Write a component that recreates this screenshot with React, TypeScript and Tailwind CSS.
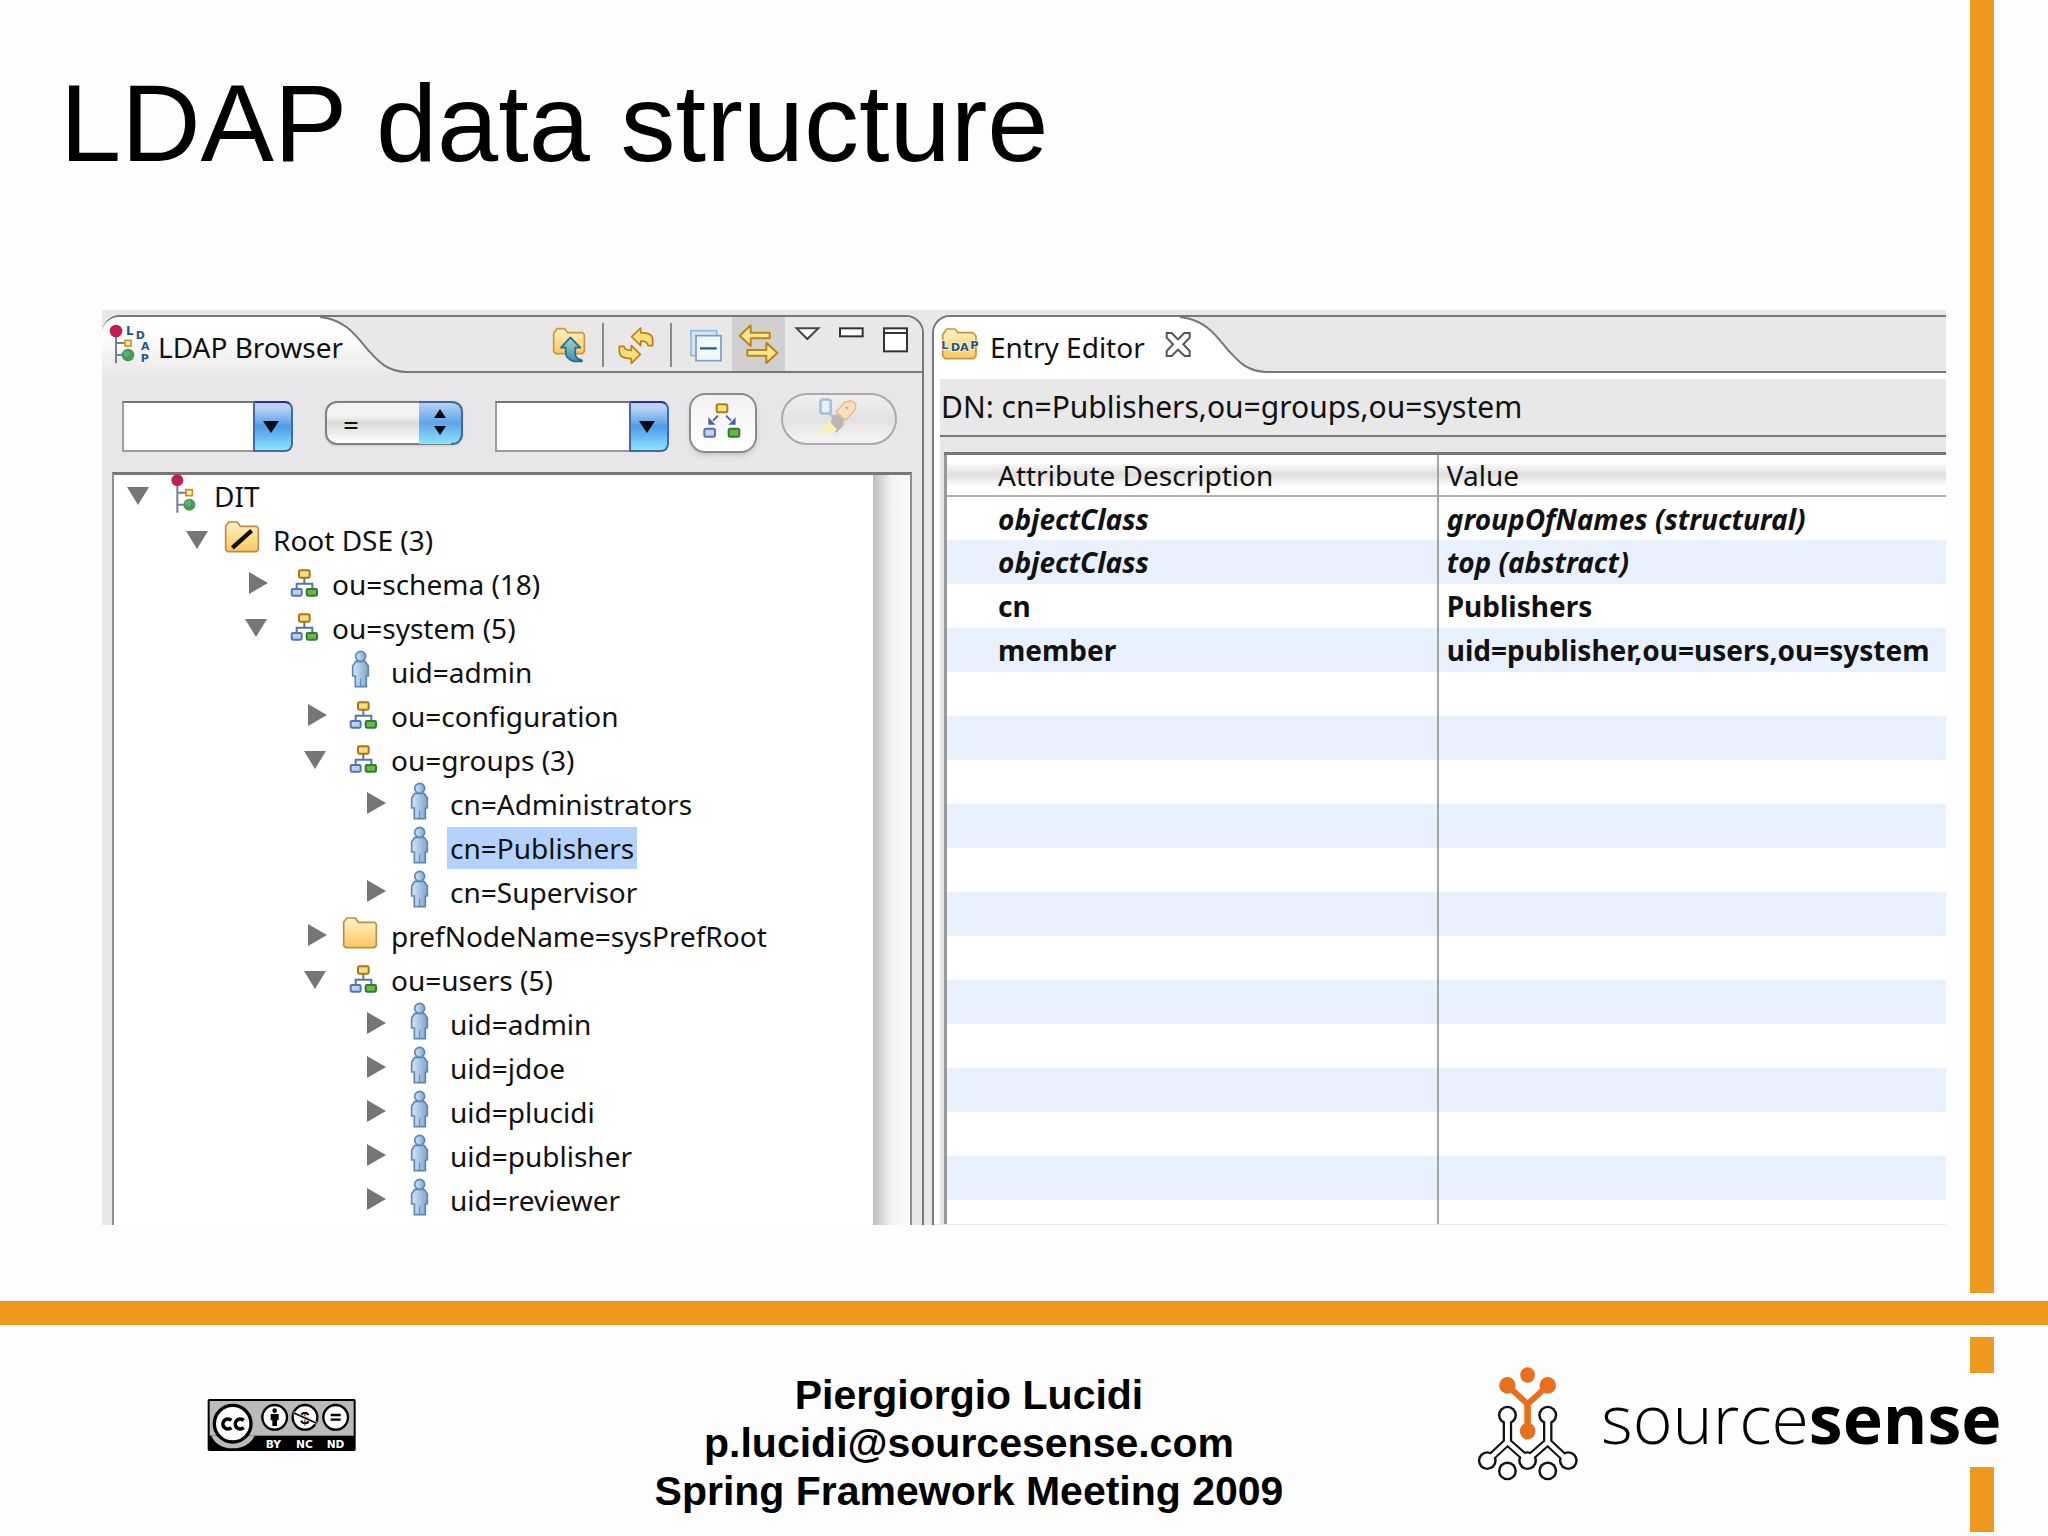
import { useState } from 'react';
import type { ReactNode } from 'react';
import clsx from 'clsx';

type IconKind = 'dit' | 'root' | 'org' | 'person' | 'folder';

interface TreeItem {
  id: string;
  label: string;
  depth: number;
  icon: IconKind;
  state: 'open' | 'closed' | 'leaf';
}

const treeItems: TreeItem[] = [
  { id: 'dit', label: 'DIT', depth: 0, icon: 'dit', state: 'open' },
  { id: 'root', label: 'Root DSE (3)', depth: 1, icon: 'root', state: 'open' },
  { id: 'schema', label: 'ou=schema (18)', depth: 2, icon: 'org', state: 'closed' },
  { id: 'system', label: 'ou=system (5)', depth: 2, icon: 'org', state: 'open' },
  { id: 'system-admin', label: 'uid=admin', depth: 3, icon: 'person', state: 'leaf' },
  { id: 'configuration', label: 'ou=configuration', depth: 3, icon: 'org', state: 'closed' },
  { id: 'groups', label: 'ou=groups (3)', depth: 3, icon: 'org', state: 'open' },
  { id: 'administrators', label: 'cn=Administrators', depth: 4, icon: 'person', state: 'closed' },
  { id: 'publishers', label: 'cn=Publishers', depth: 4, icon: 'person', state: 'leaf' },
  { id: 'supervisor', label: 'cn=Supervisor', depth: 4, icon: 'person', state: 'closed' },
  { id: 'prefs', label: 'prefNodeName=sysPrefRoot', depth: 3, icon: 'folder', state: 'closed' },
  { id: 'users', label: 'ou=users (5)', depth: 3, icon: 'org', state: 'open' },
  { id: 'users-admin', label: 'uid=admin', depth: 4, icon: 'person', state: 'closed' },
  { id: 'jdoe', label: 'uid=jdoe', depth: 4, icon: 'person', state: 'closed' },
  { id: 'plucidi', label: 'uid=plucidi', depth: 4, icon: 'person', state: 'closed' },
  { id: 'publisher', label: 'uid=publisher', depth: 4, icon: 'person', state: 'closed' },
  { id: 'reviewer', label: 'uid=reviewer', depth: 4, icon: 'person', state: 'closed' },
];

const indent = ['pl-[12px]', 'pl-[71px]', 'pl-[130px]', 'pl-[189px]', 'pl-[248px]'];

const attributes = [
  { name: 'objectClass', value: 'groupOfNames (structural)', italic: true },
  { name: 'objectClass', value: 'top (abstract)', italic: true },
  { name: 'cn', value: 'Publishers', italic: false },
  { name: 'member', value: 'uid=publisher,ou=users,ou=system', italic: false },
];

const emptyRows = Array.from({ length: 12 }, (_, i) => i);

function Gradients() {
  return (
    <svg className="absolute h-0 w-0" aria-hidden="true">
      <defs>
        <linearGradient id="gold" x1="0" y1="0" x2="0" y2="1">
          <stop offset="0" stopColor="#fff3c4" />
          <stop offset="1" stopColor="#fbc85f" />
        </linearGradient>
        <linearGradient id="person" x1="0" y1="0" x2="1" y2="0">
          <stop offset="0" stopColor="#d5e6f6" />
          <stop offset="1" stopColor="#7fa5cf" />
        </linearGradient>
        <linearGradient id="arrowUp" x1="0" y1="0" x2="0" y2="1">
          <stop offset="0" stopColor="#a5d6bd" />
          <stop offset="1" stopColor="#3f8fb5" />
        </linearGradient>
      </defs>
    </svg>
  );
}

function TreeIcon({ kind }: { kind: IconKind }) {
  const base = 'h-[42px] w-[38px] shrink-0 overflow-visible';

  if (kind === 'dit') {
    return (
      <svg className={base} viewBox="195 45 114 126" aria-hidden="true">
        <path d="M232 70V158M232 98H258M232 134H256" stroke="#77808f" strokeWidth="6" fill="none" />
        <circle cx="232" cy="61" r="18" fill="#c01f50" />
        <rect x="258" y="89" width="19" height="18" fill="#fff0b0" stroke="#c4901f" strokeWidth="5" />
        <circle cx="268" cy="134" r="18" fill="#489a5c" />
        <circle cx="264" cy="130" r="9" fill="#62b173" />
      </svg>
    );
  }
  if (kind === 'org') {
    return (
      <svg className={base} viewBox="549 309 114 126" aria-hidden="true">
        <path d="M613 354V370M590 390V371H637V390" stroke="#5673ae" strokeWidth="6" fill="none" />
        <rect x="597" y="331" width="32" height="22" rx="4" fill="#fddc80" stroke="#a87514" strokeWidth="6" />
        <rect x="575" y="387" width="30" height="20" rx="4" fill="#b7d3f0" stroke="#5673ae" strokeWidth="6" />
        <rect x="620" y="387" width="31" height="20" rx="4" fill="#6cb93f" stroke="#2f7a36" strokeWidth="6" />
      </svg>
    );
  }
  if (kind === 'person') {
    return (
      <svg className={base} viewBox="726 573 114 126" aria-hidden="true">
        <path
          d="M768 604H795L805 618V648H799V680H766V648H758V618Z"
          fill="url(#person)"
          stroke="#5b86b4"
          strokeWidth="5"
          strokeLinejoin="round"
        />
        <circle cx="782" cy="589" r="15" fill="url(#person)" stroke="#5b86b4" strokeWidth="5" />
        <path d="M782 655V680" stroke="#5b86b4" strokeWidth="3" />
      </svg>
    );
  }
  return (
    <svg className={base} viewBox="372 177 114 126" aria-hidden="true">
      <path
        d="M377 198L387 186H412L421 199H470L475 205V269L469 275H383L377 269Z"
        fill="url(#gold)"
        stroke="#c08a42"
        strokeWidth="5"
        strokeLinejoin="round"
      />
      {kind === 'root' && <path d="M402 259L450 216" stroke="#111" strokeWidth="13" strokeLinecap="square" />}
    </svg>
  );
}

function Arrow({ state }: { state: TreeItem['state'] }) {
  return (
    <svg className="mr-[14px] h-[42px] w-6 shrink-0" viewBox="0 0 24 42" aria-hidden="true">
      {state === 'open' && <path d="M0 12H22L11 30Z" fill="#767676" />}
      {state === 'closed' && <path d="M4 9L23 20L4 31Z" fill="#767676" />}
    </svg>
  );
}

function ToolButton({ label, className, viewBox, children }: { label: string; className: string; viewBox: string; children: ReactNode }) {
  return (
    <button type="button" aria-label={label} className={clsx('h-[54px] shrink-0', className)}>
      <svg className="h-full w-full" viewBox={viewBox} fill="none">
        {children}
      </svg>
    </button>
  );
}

function TabCurve({ fill }: { fill: string }) {
  return (
    <svg className="h-14 w-[86px] shrink-0" viewBox="0 0 86 56" aria-hidden="true">
      <defs>
        <linearGradient id="tabFade" x1="0" y1="0" x2="0" y2="1">
          <stop offset="0.3" stopColor="#ffffff" />
          <stop offset="1" stopColor="#ebe9ea" />
        </linearGradient>
      </defs>
      <path d="M0 0H86V56H0Z" fill="#e8e8e8" />
      <path d="M0 0C28 3 38 22 48 33S66 54 86 55V56H0Z" fill={fill} />
      <path d="M0 0C28 3 38 22 48 33S66 54 86 55" fill="none" stroke="#777" strokeWidth="2" />
    </svg>
  );
}

function Combo({ label, className }: { label: string; className: string }) {
  return (
    <div className={clsx('flex h-[51px]', className)}>
      <input
        type="text"
        aria-label={label}
        className="w-0 flex-1 border-2 border-r-0 border-[#9c9c9c] border-t-[#747474] bg-white px-2 text-[28px] outline-none"
      />
      <button
        type="button"
        aria-label={`${label} history`}
        className="flex w-10 items-center justify-center rounded-r-lg border-2 border-[#4468a0] border-t-[#2b2f9b] bg-linear-to-b from-[#b9d4f6] from-10% via-[#4f9be8] via-50% to-[#8be4fd] pr-1"
      >
        <svg className="h-3 w-4" viewBox="0 0 16 12" aria-hidden="true">
          <path d="M0 0H16L8 12Z" fill="#0b0b18" />
        </svg>
      </button>
    </div>
  );
}

function BrowserToolbar() {
  return (
    <div className="flex flex-1 items-start justify-end border-b-2 border-[#777] bg-[#e8e8e8]">
      <ToolButton label="Up" className="w-[55px]" viewBox="141 51 165 162">
        <path d="M161 100L171 86H194L203 98H248L253 104V155L247 161H167L161 155Z" fill="url(#gold)" stroke="#d09438" strokeWidth="5" strokeLinejoin="round" />
        <path d="M211 112L241 143H226V165Q230 178 246 181V184H222Q197 176 197 158V143H183Z" fill="url(#arrowUp)" stroke="#276a99" strokeWidth="5" strokeLinejoin="round" />
      </ToolButton>
      <div className="mt-[6px] h-11 w-[2px] bg-[#8a8a8a]" />
      <ToolButton label="Refresh" className="w-[66px]" viewBox="312 51 198 162">
        <path d="M395 110L422 84V98Q458 98 458 119V137H444Q443 123 422 123V137Z" fill="#fddf7d" stroke="#bf8015" strokeWidth="5" strokeLinejoin="round" />
        <path d="M421 163L394 190V176Q358 176 358 154V139H372Q373 151 394 151V137Z" fill="#fddf7d" stroke="#bf8015" strokeWidth="5" strokeLinejoin="round" />
      </ToolButton>
      <div className="mt-[6px] h-11 w-[2px] bg-[#8a8a8a]" />
      <ToolButton label="Collapse all" className="w-[60px]" viewBox="516 51 180 162">
        <rect x="573" y="92" width="77" height="75" fill="#cfe6f3" stroke="#93b9d8" strokeWidth="5" />
        <rect x="588" y="107" width="75" height="75" fill="#f0f8fd" stroke="#8199c6" strokeWidth="5" />
        <path d="M600 145H650" stroke="#1f5f96" strokeWidth="7" />
      </ToolButton>
      <ToolButton label="Link with editor" className="w-[53px] bg-[#d0d0d0]" viewBox="696 51 159 162">
        <path d="M719 107L752 76V98H809V115H752V138Z" fill="#ffe894" stroke="#bf8015" strokeWidth="6" strokeLinejoin="round" />
        <path d="M832 159L799 189V167H742V150H799V128Z" fill="#ffe894" stroke="#bf8015" strokeWidth="6" strokeLinejoin="round" />
      </ToolButton>
      <ToolButton label="View menu" className="w-[45px]" viewBox="855 51 135 162">
        <path d="M890 85H955L922 117Z" fill="#fff" stroke="#444" strokeWidth="6" />
      </ToolButton>
      <ToolButton label="Minimize" className="w-11" viewBox="990 51 132 162">
        <rect x="1020" y="85" width="68" height="24" fill="#fff" stroke="#333" strokeWidth="6" />
      </ToolButton>
      <ToolButton label="Maximize" className="w-12" viewBox="1122 51 144 162">
        <rect x="1152" y="85" width="69" height="69" fill="#fff" stroke="#333" strokeWidth="6" />
        <path d="M1152 99H1221" stroke="#333" strokeWidth="6" />
      </ToolButton>
    </div>
  );
}

function LdapBrowser() {
  const [selected, setSelected] = useState('publishers');

  return (
    <section className="mt-[5px] flex min-w-0 flex-col overflow-hidden rounded-t-[18px] border-t-2 border-r-2 border-[#777] bg-[#e8e6e8]">
      <div className="flex h-14 items-stretch">
        <div className="flex w-[218px] shrink-0 items-center bg-linear-to-b from-white from-30% to-[#ebe9ea]">
          <svg className="h-14 w-[56px] shrink-0" viewBox="36 51 168 168" aria-hidden="true">
            <path d="M78 95V190M78 129H104M78 165H98" stroke="#77808f" strokeWidth="6" fill="none" />
            <circle cx="78" cy="93" r="19" fill="#c01f50" />
            <rect x="105" y="121" width="18" height="17" fill="#fff0b0" stroke="#d0902a" strokeWidth="5" />
            <circle cx="114" cy="165" r="19" fill="#489a5c" />
            <circle cx="110" cy="161" r="9" fill="#62b173" />
            <g fill="#1e5590" fontFamily="DejaVu Sans, sans-serif" fontWeight="700" fontSize="36">
              <text x="108" y="105">L</text>
              <text x="137" y="117" fontSize="33">D</text>
              <text x="153" y="150" fontSize="33">A</text>
              <text x="152" y="186" fontSize="33">P</text>
            </g>
          </svg>
          <h2 className="relative z-10 pt-1 text-[28px] whitespace-nowrap">LDAP Browser</h2>
        </div>
        <TabCurve fill="url(#tabFade)" />
        <BrowserToolbar />
      </div>

      <div className="flex h-[99px] items-start pt-7 pr-6 pl-5">
        <Combo label="Attribute" className="mr-8 w-[171px]" />
        <div className="relative mr-8 h-11 w-[138px]">
          <select
            aria-label="Operator"
            className="h-full w-full appearance-none rounded-xl border-2 border-[#808080] bg-linear-to-b from-[#f4f4f4] from-30% via-[#dadada] via-50% to-white pl-4 text-[28px] shadow-sm"
          >
            <option>=</option>
          </select>
          <svg className="pointer-events-none absolute top-0 right-0 h-11 w-[44px]" viewBox="0 0 44 44" aria-hidden="true">
            <defs>
              <linearGradient id="stepper" x1="0" y1="0" x2="0" y2="1">
                <stop offset="0" stopColor="#b9d4f6" />
                <stop offset="0.5" stopColor="#5fa4e8" />
                <stop offset="1" stopColor="#8be4fd" />
              </linearGradient>
            </defs>
            <path d="M0 1H32Q43 1 43 12V32Q43 43 32 43H0Z" fill="url(#stepper)" />
            <path d="M0 1H32Q43 1 43 12V32Q43 43 32 43" fill="none" stroke="#4468a0" strokeWidth="2" />
            <path d="M15 17H27L21 8ZM15 25H27L21 34Z" fill="#0b0b18" />
          </svg>
        </div>
        <Combo label="Value" className="mr-5 w-[174px]" />
        <button
          type="button"
          aria-label="Search subtree"
          className="-mt-2 mr-6 h-[60px] w-[68px] rounded-2xl border-2 border-[#8b8b8b] bg-linear-to-b from-[#f2f2f2] to-white shadow-md"
        >
          <svg className="h-full w-full" viewBox="576 285 192 168" fill="none" aria-hidden="true">
            <rect x="653" y="313" width="32" height="24" rx="5" fill="#fddc80" stroke="#b37d17" strokeWidth="6" />
            <rect x="616" y="386" width="32" height="24" rx="5" fill="#b7d3f0" stroke="#5673ae" strokeWidth="6" />
            <rect x="689" y="386" width="32" height="24" rx="5" fill="#6cb93f" stroke="#2f7a36" strokeWidth="6" />
            <path d="M657 347L642 362M681 347L696 362" stroke="#4c62a8" strokeWidth="6" />
            <path d="M628 374V352L650 374ZM710 374V352L688 374Z" fill="#4c62a8" />
          </svg>
        </button>
        <button
          type="button"
          aria-label="Search"
          className="-mt-2 h-[52px] w-[116px] rounded-full border-2 border-[#aaa] bg-linear-to-b from-[#f0f0f0] via-[#e2e2e2] via-50% to-[#f4f4f4]"
        >
          <svg className="h-full w-full" viewBox="852 285 342 150" fill="none" aria-hidden="true">
            <path d="M1040 308L1060 303L1076 312L1074 330L1044 364L1014 338Z" fill="#f8dfb8" stroke="#e5b98a" strokeWidth="4" />
            <path d="M1044 322L1050 328" stroke="#9aa9b4" strokeWidth="5" />
            <path d="M1003 350L1018 345L1040 364L1036 382L1014 403L992 388Z" fill="#bcb6b6" />
            <path d="M992 366L960 403H1008L1016 392Z" fill="#fbf1b4" />
            <rect x="965" y="299" width="32" height="44" rx="8" fill="#e8eef6" stroke="#a8bcd8" strokeWidth="8" />
            <path d="M993 342L1006 356" stroke="#a8bcd8" strokeWidth="7" />
          </svg>
        </button>
      </div>

      <div className="mr-[10px] ml-[10px] flex flex-1 border-x-2 border-t-[3px] border-[#909090] border-t-[#777] bg-white">
        <ul className="flex-1 pb-[2px] pl-px">
          {treeItems.map(item => (
            <li key={item.id}>
              <button
                type="button"
                aria-expanded={item.state === 'leaf' ? undefined : item.state === 'open'}
                onClick={() => setSelected(item.id)}
                className={clsx('flex h-11 w-full items-start text-left', indent[item.depth])}
              >
                <Arrow state={item.state} />
                <TreeIcon kind={item.icon} />
                <span
                  className={clsx('ml-2 h-[42px] px-[3px] text-[28px] leading-[43px] whitespace-nowrap', selected === item.id && 'bg-[#b4d2fd]')}
                >
                  {item.label}
                </span>
              </button>
            </li>
          ))}
        </ul>
        <div className="w-[37px] bg-linear-to-r from-[#bdbdbf] via-[#f4f3f5] via-50% to-[#fbfafb]" />
      </div>
    </section>
  );
}

function EntryEditor() {
  return (
    <section className="mt-[5px] min-w-0 overflow-hidden rounded-tl-[18px] border-t-2 border-l-2 border-[#777] bg-[#e8e6e8]">
      <div className="flex h-14 items-stretch">
        <div className="flex w-[246px] shrink-0 items-center bg-white">
          <svg className="h-14 w-14 shrink-0" viewBox="42 51 168 168" aria-hidden="true">
            <path d="M68 104L80 87H105L114 98H158L168 108V168L160 176H76L68 168Z" fill="url(#gold)" stroke="#cf8f3d" strokeWidth="5" strokeLinejoin="round" />
            <g fill="#1e5590" stroke="#fff3c4" strokeWidth="5" paintOrder="stroke" fontFamily="DejaVu Sans, sans-serif" fontWeight="700" fontSize="34">
              <text x="64" y="146">L</text>
              <text x="92" y="154">D</text>
              <text x="120" y="154">A</text>
              <text x="151" y="146">P</text>
            </g>
          </svg>
          <h2 className="pt-1 text-[28px] whitespace-nowrap">Entry Editor</h2>
          <button type="button" aria-label="Close editor" className="relative -mr-3 ml-auto h-14 w-7">
            <svg className="h-full w-full" viewBox="729 51 84 168" fill="none" aria-hidden="true">
              <path
                d="M737 99H752L771 118L790 99H806V113L787 133L806 153V168H791L771 149L752 168H737V153L756 133L737 113Z"
                fill="#fff"
                stroke="#555"
                strokeWidth="6"
              />
            </svg>
          </button>
        </div>
        <TabCurve fill="#ffffff" />
        <div className="flex-1 border-b-2 border-[#777] bg-[#e8e8e8]" />
      </div>

      <div className="bg-white pt-[6px] pl-[6px]">
        <p className="h-[58px] border-b-2 border-[#777] bg-[#e8e8e8] pl-px text-[30px] leading-[56px] whitespace-nowrap">
          DN: cn=Publishers,ou=groups,ou=system
        </p>
        <div className="bg-[#e8e6e8] pt-[15px] pl-1">
          <table className="w-full table-fixed border-collapse border-t-[3px] border-l-[3px] border-[#777] border-l-[#999] bg-white text-left text-[28px]">
            <colgroup>
              <col className="w-[49.2%]" />
              <col />
            </colgroup>
            <thead>
              <tr className="h-[42px] border-b-2 border-[#b0b0b0] bg-linear-to-b from-white from-20% via-[#dedede] via-50% to-white to-80%">
                <th scope="col" className="border-r-2 border-[#a4a4a4] p-0 pl-[51px] leading-[40px] font-normal">Attribute Description</th>
                <th scope="col" className="p-0 pl-2 leading-[40px] font-normal">Value</th>
              </tr>
            </thead>
            <tbody>
              {attributes.map((row, i) => (
                <tr key={i} className="h-11 font-bold even:bg-[#e9f1fe]">
                  <td className={clsx('border-r-2 border-[#a4a4a4] p-0 pl-[51px] leading-[42px]', row.italic && 'italic')}>{row.name}</td>
                  <td className={clsx('p-0 pl-2 leading-[42px] whitespace-nowrap', row.italic && 'italic')}>{row.value}</td>
                </tr>
              ))}
              {emptyRows.map(i => (
                <tr key={`empty-${i}`} className="h-11 even:bg-[#e9f1fe]">
                  <td className="border-r-2 border-[#a4a4a4] p-0" />
                  <td className="p-0" />
                </tr>
              ))}
              <tr className="h-6">
                <td className="border-r-2 border-[#a4a4a4] p-0" />
                <td className="p-0" />
              </tr>
            </tbody>
          </table>
        </div>
      </div>
    </section>
  );
}

function CcBadge() {
  return (
    <svg className="h-[54px] w-[150px]" viewBox="53 55 450 162" role="img" aria-label="Creative Commons BY NC ND">
      <rect x="55" y="58" width="444" height="156" rx="5" fill="#000" />
      <rect x="61" y="64" width="432" height="104" fill="#b9bbb8" />
      <path d="M66 168Q82 205 130 206Q178 205 196 168Z" fill="#b9bbb8" />
      <circle cx="130" cy="132" r="55" fill="#fff" stroke="#000" strokeWidth="10" />
      <g fill="none" stroke="#000" strokeWidth="11">
        <path d="M126 122A15 15 0 1 0 126 144" />
        <path d="M163 122A15 15 0 1 0 163 144" />
      </g>
      <g fill="#fff" stroke="#000" strokeWidth="7">
        <circle cx="256" cy="113" r="37" />
        <circle cx="347" cy="113" r="37" />
        <circle cx="439" cy="113" r="37" />
      </g>
      <circle cx="256" cy="93" r="7" />
      <path d="M244 103H268V122H263V139H249V122H244Z" />
      <text x="332" y="132" fontFamily="Liberation Sans, sans-serif" fontWeight="700" fontSize="52">$</text>
      <path d="M312 99L382 131" stroke="#fff" strokeWidth="9" />
      <path d="M312 99L382 131" stroke="#000" strokeWidth="5" />
      <path d="M424 106H454M424 120H454" stroke="#000" strokeWidth="7" />
      <g fill="#fff" fontFamily="DejaVu Sans, sans-serif" fontWeight="700" fontSize="32">
        <text x="229" y="204">BY</text>
        <text x="320" y="204">NC</text>
        <text x="412" y="204">ND</text>
      </g>
    </svg>
  );
}

const logoNodes = [
  [262, 405],
  [360, 405],
  [213, 541],
  [311, 541],
  [410, 541],
  [262, 572],
  [360, 572],
];

const logoLinks = 'M262 410V485L216 538M262 485L311 538L360 485L406 538M360 485V410';

function LogoMark() {
  return (
    <svg className="h-[115px] w-[102px] shrink-0" viewBox="188 258 248 344" preserveAspectRatio="none" aria-hidden="true">
      <path d={logoLinks} fill="none" stroke="#111" strokeWidth="23" />
      {logoNodes.map(([x, y]) => (
        <ellipse key={`${x}-${y}`} cx={x} cy={y} rx="23" ry="28" fill="#111" />
      ))}
      <path d={logoLinks} fill="none" stroke="#fff" strokeWidth="12" />
      {logoNodes.map(([x, y]) => (
        <ellipse key={`${x}-${y}`} cx={x} cy={y} rx="17" ry="21" fill="#fff" />
      ))}
      <g fill="#e8701c">
        <ellipse cx="311" cy="285" rx="18" ry="23" />
        <ellipse cx="262" cy="316" rx="20" ry="25" />
        <ellipse cx="360" cy="316" rx="20" ry="25" />
        <ellipse cx="311" cy="453" rx="19" ry="25" />
        <path d="M262 316L311 372L360 316M311 368V453" fill="none" stroke="#e8701c" strokeWidth="16" />
      </g>
    </svg>
  );
}

export default function App() {
  return (
    <div className="flex min-h-screen flex-col overflow-hidden bg-[#fefdfe] font-['Noto_Sans',sans-serif] text-[#111]">
      <Gradients />
      <div className="flex flex-1">
        <main className="min-w-0 flex-1 pr-6 pb-[74px]">
          <h1 className="pt-[60px] pl-[60px] font-['Liberation_Sans',sans-serif] text-[110px] leading-[126px] whitespace-nowrap text-black">
            LDAP data structure
          </h1>
          <div className="mt-[124px] ml-[102px] grid grid-cols-[822fr_8px_1014fr] bg-[#e8e8e8]">
            <LdapBrowser />
            <div />
            <EntryEditor />
          </div>
        </main>
        <div className="mr-[54px] mb-2 w-6 bg-[#ee9820]" />
      </div>

      <div className="h-6 bg-[#ee9820]" />

      <footer className="grid h-[211px] grid-cols-[minmax(0,564fr)_minmax(0,810fr)_minmax(0,596fr)_78px]">
        <div className="pt-[73px] pl-[207px]">
          <CcBadge />
        </div>
        <address className="pt-[46px] text-center font-['Liberation_Sans',sans-serif] text-[41px] leading-[48px] font-bold text-black not-italic">
          <p>Piergiorgio Lucidi</p>
          <p>p.lucidi@sourcesense.com</p>
          <p>Spring Framework Meeting 2009</p>
        </address>
        <div className="relative z-10 flex items-start pt-[41px] pl-[103px]">
          <LogoMark />
          <p className="ml-[22px] font-['Open_Sans',sans-serif] text-[68px] leading-[104px] font-light whitespace-nowrap text-black">
            source<span className="font-bold">sense</span>
          </p>
        </div>
        <div className="pt-3">
          <div className="h-9 w-6 bg-[#ee9820]" />
          <div className="mt-[94px] h-[65px] w-6 bg-[#ee9820]" />
        </div>
      </footer>
    </div>
  );
}
